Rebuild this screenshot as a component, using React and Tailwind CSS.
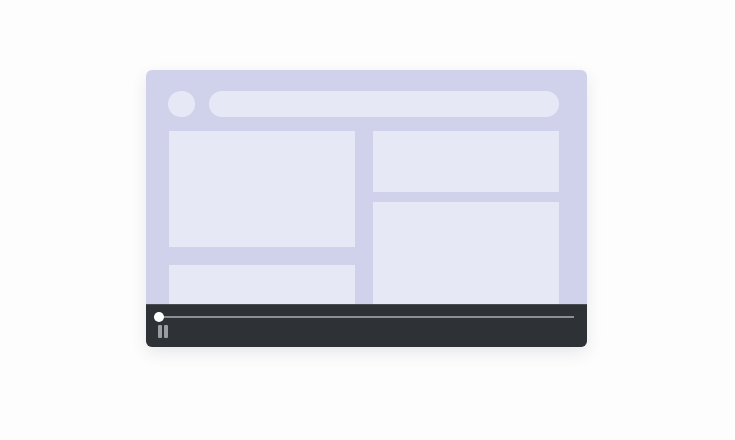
export default function App() {
  return (
    <div className="w-[735px] h-[440px] bg-[#fdfdfd] pt-[70px] pl-[146px]">
      <div className="w-[441px] h-[277px] rounded-[6px] overflow-hidden flex flex-col bg-[#cfd2ea] shadow-[0_6px_16px_rgba(40,50,80,0.10)]">
        {/* mock page content */}
        <div className="h-[234px] overflow-hidden pt-[21px] pl-[22px] pr-[28px]">
          <div className="flex items-center gap-[14px]">
            <div className="w-[27px] h-[26px] rounded-full bg-[#e6e8f6]" />
            <div className="flex-1 h-[26px] rounded-full bg-[#e6e8f6]" />
          </div>
          <div className="mt-[14px] pl-[1px] grid grid-cols-2 gap-[18px]">
            <div className="flex flex-col gap-[18px]">
              <div className="h-[116px] bg-[#e6e8f6]" />
              <div className="h-[116px] bg-[#e6e8f6]" />
            </div>
            <div className="flex flex-col gap-[10px]">
              <div className="h-[61px] bg-[#e6e8f6]" />
              <div className="h-[160px] bg-[#e6e8f6]" />
            </div>
          </div>
        </div>
        {/* player controls */}
        <div className="h-[43px] bg-[#2e3236] border-t border-[#4a4e53] pl-[8px] pr-[13px] pt-[7px]">
          <div className="relative h-[10px] flex items-center">
            <div className="w-full h-[2px] bg-[#8c8f93]" />
            <div className="absolute left-0 top-0 w-[10px] h-[10px] rounded-full bg-white" />
          </div>
          <div className="mt-[3px] pl-[4px] flex gap-[2px]">
            <div className="w-[4px] h-[13px] rounded-[1px] bg-[#9a9da1]" />
            <div className="w-[4px] h-[13px] rounded-[1px] bg-[#9a9da1]" />
          </div>
        </div>
      </div>
    </div>
  );
}
